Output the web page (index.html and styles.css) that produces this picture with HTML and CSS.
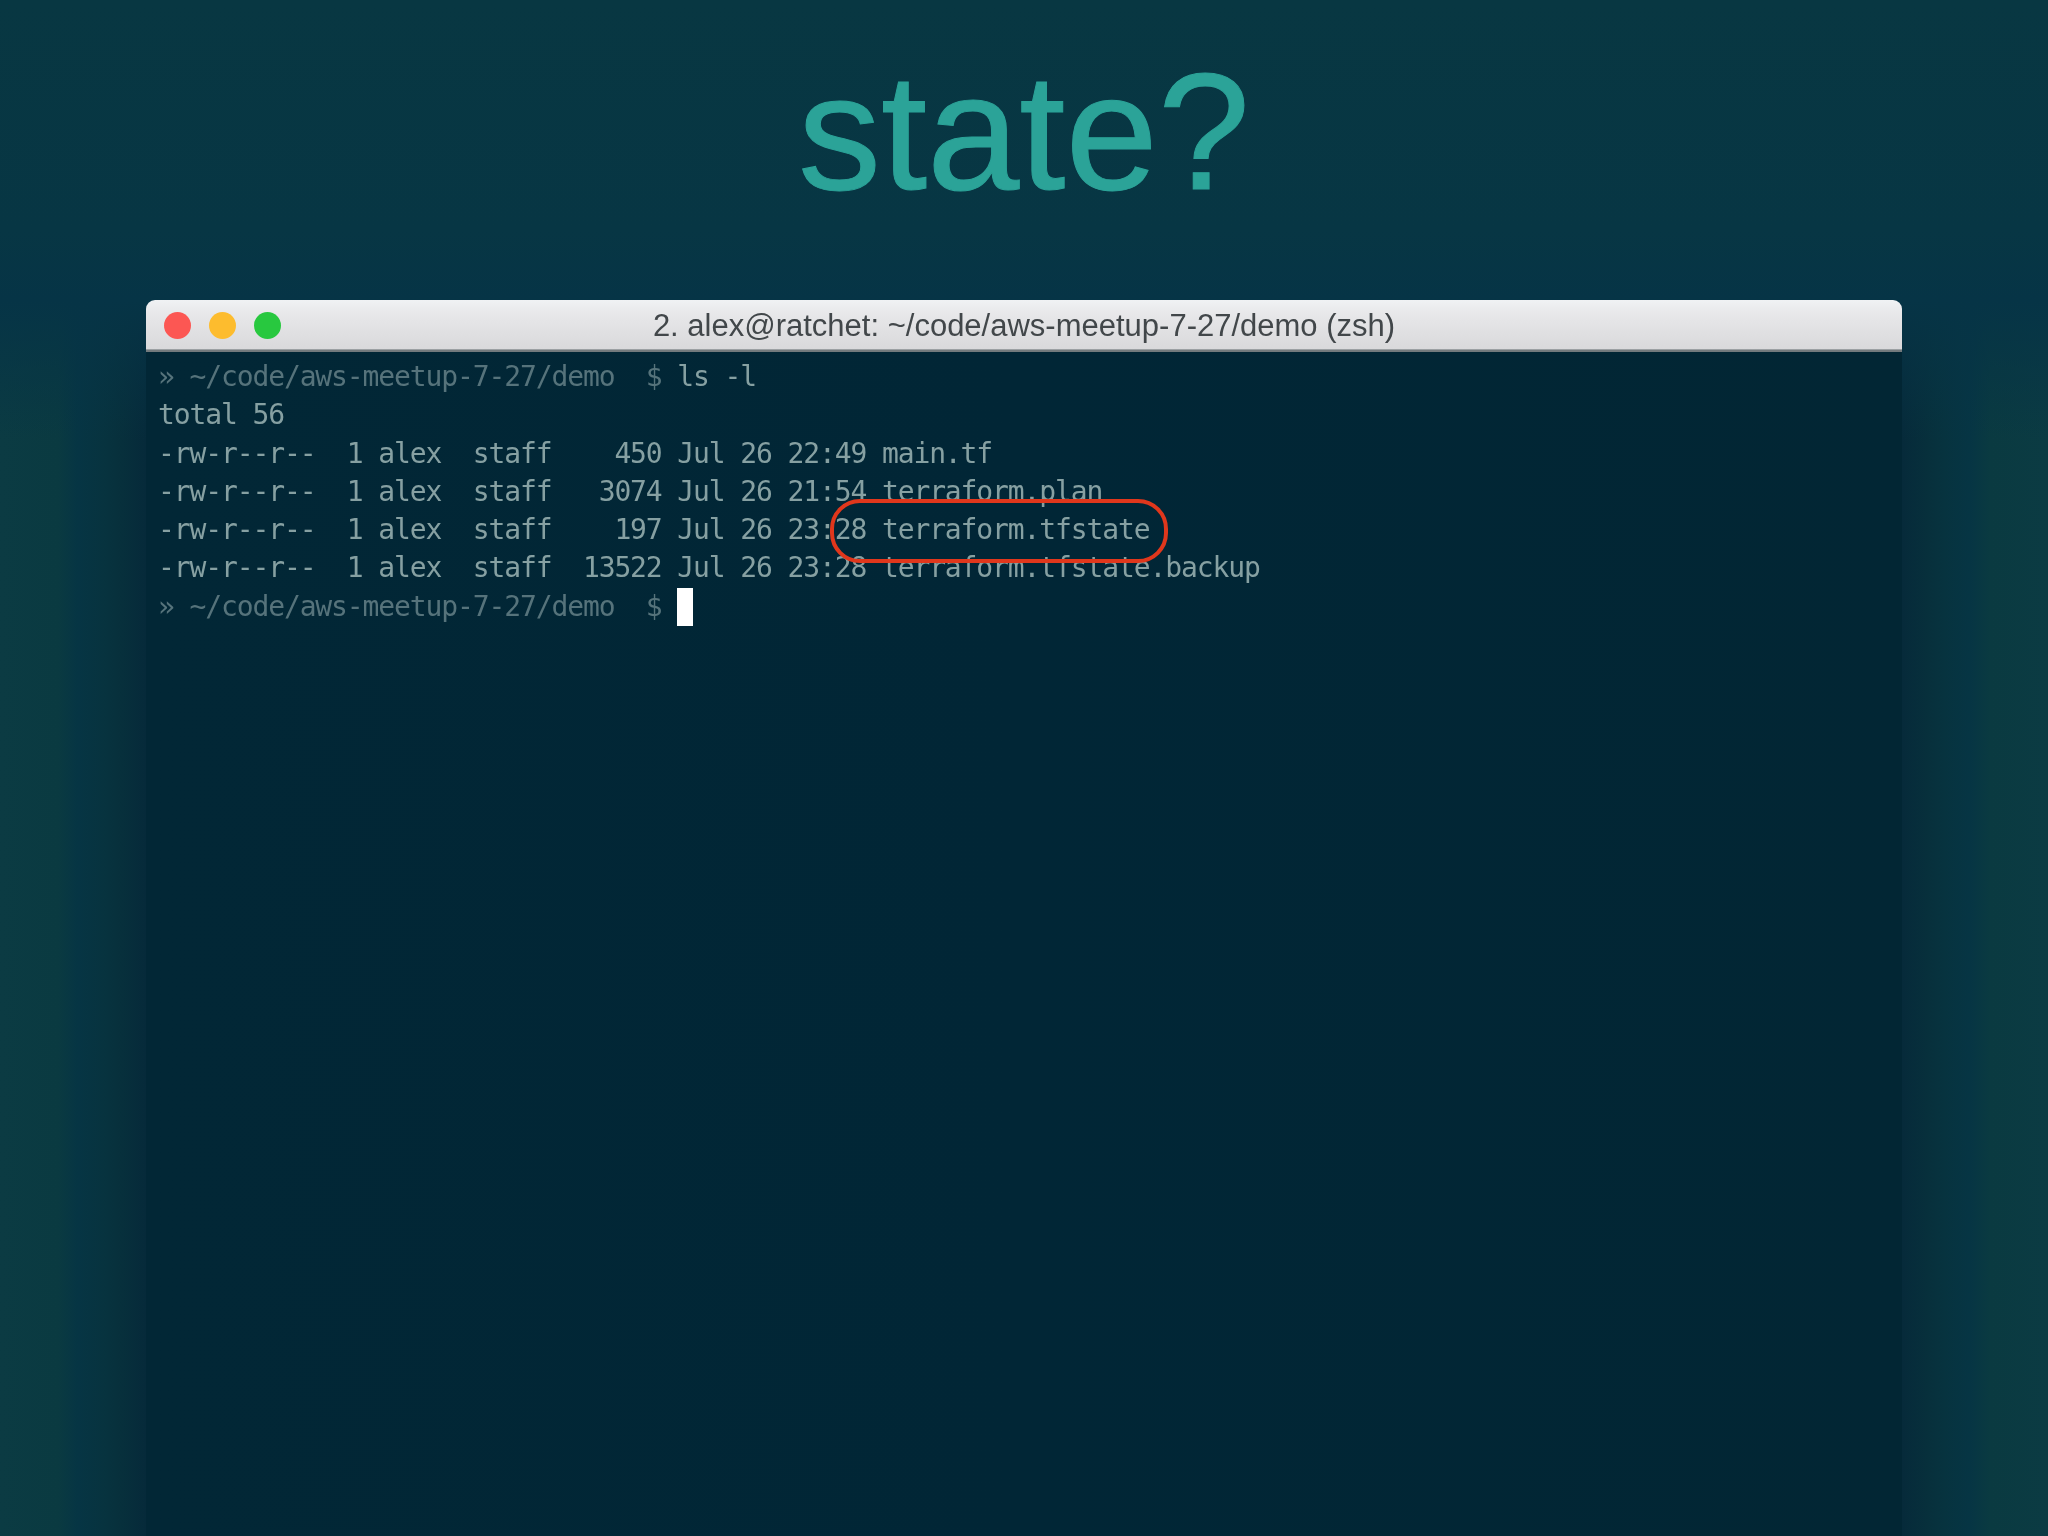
FILE: index.html
```html
<!DOCTYPE html>
<html lang="en">
<head>
<meta charset="utf-8">
<title>state?</title>
<link rel="stylesheet" href="styles.css">
</head>
<body>
<main class="slide">
  <h1 class="title">state?</h1>
  <section class="window">
    <header class="titlebar">
      <div class="lights">
        <span class="light light-red"></span>
        <span class="light light-yellow"></span>
        <span class="light light-green"></span>
      </div>
      <div class="window-title">2. alex@ratchet: ~/code/aws-meetup-7-27/demo (zsh)</div>
    </header>
    <div class="terminal">
<pre class="output"><span class="prompt">» ~/code/aws-meetup-7-27/demo  $</span> ls -l
total 56
-rw-r--r--  1 alex  staff    450 Jul 26 22:49 main.tf
-rw-r--r--  1 alex  staff   3074 Jul 26 21:54 terraform.plan
-rw-r--r--  1 alex  staff    197 Jul 26 23:28 terraform.tfstate
-rw-r--r--  1 alex  staff  13522 Jul 26 23:28 terraform.tfstate.backup
<span class="prompt">» ~/code/aws-meetup-7-27/demo  $</span> <span class="cursor"></span></pre>
      <div class="callout"></div>
    </div>
  </section>
</main>
</body>
</html>
```
FILE: styles.css
```css
* { box-sizing: border-box; }
html, body { margin: 0; height: 100%; }
body { background: #07343f; overflow: hidden; }
.slide {
  width: 2048px;
  height: 1536px;
  display: flex;
  flex-direction: column;
  align-items: center;
  overflow: hidden;
  background:
    linear-gradient(180deg, #083742 0, #073644 230px, #063446 300px, rgba(6, 52, 70, 0) 440px),
    linear-gradient(90deg,
      #0b3b43 0, #0a3a41 58px, #063544 78px, #07333f 104px,
      #07303c 120px, #062a3a 146px,
      #062a3a 1902px, #07303c 1928px, #07333f 1944px,
      #063544 1970px, #0a3a41 1990px, #0b3b43 2048px);
}
.title {
  margin: 0;
  height: 300px;
  padding-top: 37px;
  font-family: "Liberation Sans", Arial, sans-serif;
  font-weight: 400;
  font-size: 166px;
  line-height: 190px;
  color: #2ba398;
  -webkit-text-stroke: 1px #2ba398;
  filter: blur(0.5px);
}
.window {
  width: 1756px;
  flex: 1;
  display: flex;
  flex-direction: column;
  border-radius: 9px 9px 0 0;
}
.titlebar {
  position: relative;
  height: 52px;
  flex: none;
  display: flex;
  align-items: center;
  justify-content: center;
  border-radius: 9px 9px 0 0;
  background: linear-gradient(#f0f2f4 0%, #e8e8ea 25%, #d9d9db 94%, #737a7d 96%, #737a7d 100%);
}
.lights {
  position: absolute;
  left: 18px;
  top: 12px;
  display: flex;
  gap: 18px;
}
.light { width: 27px; height: 27px; border-radius: 50%; }
.light-red { background: #fc5753; }
.light-yellow { background: #fdbc2e; }
.light-green { background: #28c83f; }
.window-title {
  font-family: "Liberation Sans", Arial, sans-serif;
  font-size: 31px;
  color: #42474a;
  filter: blur(0.4px);
}
.terminal {
  position: relative;
  flex: 1;
  padding: 6px 12px 0;
  background: linear-gradient(90deg, #022736 0%, #012636 50%, #022634 100%);
}
.output {
  margin: 0;
  font-family: "DejaVu Sans Mono", "Liberation Mono", monospace;
  font-size: 28px;
  letter-spacing: -1.12px;
  line-height: 38.3px;
  color: #86a0a2;
  filter: blur(0.5px);
}
.prompt { color: #56737b; }
.cursor {
  display: inline-block;
  width: 16px;
  height: 38px;
  vertical-align: top;
  background: #ffffff;
}
.callout {
  position: absolute;
  left: 684px;
  top: 147px;
  width: 338px;
  height: 64px;
  border: 4px solid #e0371c;
  border-radius: 30px;
}
```
